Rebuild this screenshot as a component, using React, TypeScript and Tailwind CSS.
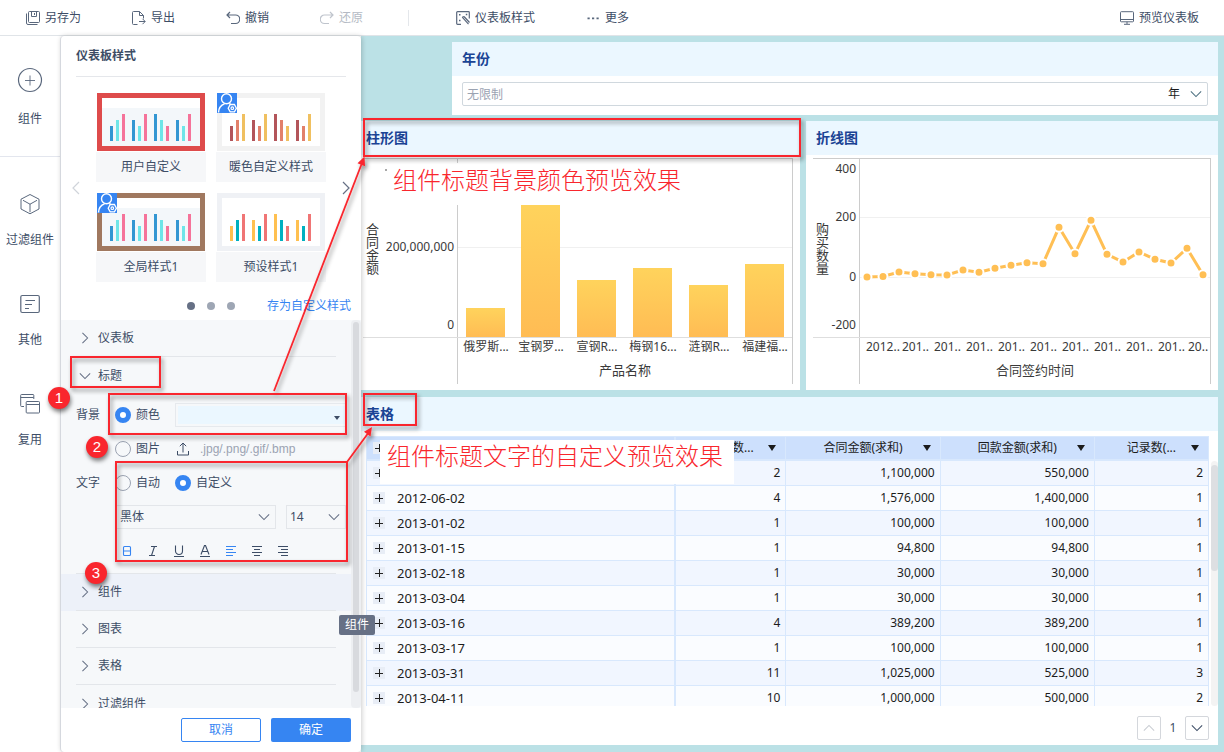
import React from "react";

const ThinChevron = ({ dir, className }: { dir: "up" | "down" | "left" | "right"; className?: string }) => {
  const paths = {
    down: "M1 4l6 6 6-6",
    up: "M1 10l6-6 6 6",
    left: "M10 1L4 7l6 6",
    right: "M4 1l6 6-6 6",
  };
  return (
    <svg viewBox="0 0 14 14" className={className} fill="none" stroke="currentColor" strokeWidth="1.2" aria-hidden="true">
      <path d={paths[dir]} />
    </svg>
  );
};

const Icon = ({ children, className = "size-3.5 opacity-85" }: { children: React.ReactNode; className?: string }) => (
  <svg viewBox="0 0 14 14" className={className} fill="none" stroke="currentColor" strokeWidth="1" aria-hidden="true">
    {children}
  </svg>
);

const SaveIcon = () => (
  <Icon>
    <path d="M3.5.5h9a1 1 0 0 1 1 1v9a1 1 0 0 1-1 1h-9a1 1 0 0 1-1-1v-9a1 1 0 0 1 1-1z" />
    <path d="M5.5.5v5h5v-5M8.500 2v2M.5 2.500v9.500a1.500 1.500 0 0 0 1.500 1.500h9.500" />
  </Icon>
);
const ExportIcon = () => (
  <Icon>
    <path d="M5.500 13.500h-4a1 1 0 0 1-1-1v-11a1 1 0 0 1 1-1h6l4 4v3M7.500.5v4h4M7 10.500h6M10.500 7.800l2.700 2.700-2.700 2.700" />
  </Icon>
);
const UndoIcon = () => (
  <Icon>
    <path strokeWidth="1.200" d="M4 1L1 4l3 3M1 4h8.500a4 4 0 0 1 0 8.500H5" />
  </Icon>
);
const RedoIcon = () => (
  <Icon>
    <path strokeWidth="1.200" d="M10 1l3 3-3 3M13 4H4.500a4 4 0 0 0 0 8.500H9" />
  </Icon>
);
const StyleIcon = () => (
  <Icon>
    <path strokeWidth="1.200" d="M5 13.300H1.500a.8.8 0 0 1-.8-.8v-11a.8.8 0 0 1 .8-.8h11a.8.8 0 0 1 .8.8V7.500" />
    <path strokeWidth="1.200" d="M6.200 6.200l6.300 7M8 5.500l5.500 6M6.200 6.200L8 5.500" />
    <path strokeWidth="1.500" d="M3 3.800h1.500M9.800 3.500h1.500M3 9.500h1.500" />
  </Icon>
);
const MoreIcon = () => (
  <svg viewBox="0 0 14 14" className="size-3.5 opacity-85" fill="currentColor" aria-hidden="true">
    <path d="M1.500 6.500h2.200v1.800H1.500zM6 6.500h2.200v1.800H6zM10.500 6.500h2.200v1.800h-2.200z" />
  </svg>
);
const ScreenIcon = () => (
  <Icon>
    <path d="M1.300.7h11.400a.8.8 0 0 1 .8.8v8.500a.8.8 0 0 1-.8.8H1.300a.8.8 0 0 1-.8-.8V1.500a.8.8 0 0 1 .8-.8zM.7 8.500h12.600M7 10.800v2.200M4 13.300h6" />
  </Icon>
);

const ToolButton = ({ icon, label, muted }: { icon: React.ReactNode; label: string; muted?: boolean }) => (
  <button type="button" disabled={muted} className={muted ? "flex items-center gap-[5px] text-[#b4bac4]" : "flex items-center gap-[5px]"}>
    {icon}
    <span>{label}</span>
  </button>
);

const Toolbar = () => (
  <header className="flex h-9 items-center border-b border-[#e0e4e8] bg-white pr-[25px] pl-[26px]">
    <div className="flex items-center gap-[51px]">
      <ToolButton icon={<SaveIcon />} label="另存为" />
      <ToolButton icon={<ExportIcon />} label="导出" />
      <ToolButton icon={<UndoIcon />} label="撤销" />
      <ToolButton icon={<RedoIcon />} label="还原" muted />
    </div>
    <div className="mr-[47px] ml-[45px] h-4 w-px bg-[#e4e7eb]" />
    <div className="flex items-center gap-[51px]">
      <ToolButton icon={<StyleIcon />} label="仪表板样式" />
      <ToolButton icon={<MoreIcon />} label="更多" />
    </div>
    <div className="ml-auto">
      <ToolButton icon={<ScreenIcon />} label="预览仪表板" />
    </div>
  </header>
);

const SideIcon = ({ children }: { children: React.ReactNode }) => (
  <svg viewBox="0 0 24 24" className="size-6 overflow-visible opacity-85" fill="none" stroke="currentColor" strokeWidth="1" aria-hidden="true">
    {children}
  </svg>
);

const Sidebar = () => (
  <nav className="w-[60px] shrink-0 bg-white">
    <button type="button" className="flex h-[121px] w-full flex-col items-center gap-[18px] border-b border-[#e3e6ee] pt-8">
      <SideIcon>
        <circle cx="12" cy="12" r="11.500" strokeWidth="1.200" />
        <path d="M7 12.500h10M12 7.500v10" strokeWidth="0.900" />
      </SideIcon>
      <span>组件</span>
    </button>
    <button type="button" className="flex h-[100px] w-full flex-col items-center gap-[15px] pt-[35px]">
      <SideIcon>
        <path d="M12 2.500l9 4.700v9.800l-9 4.800-9-4.800V7.200zM5 8.300l7 3.900 7-3.900M12 12.200v8" />
      </SideIcon>
      <span>过滤组件</span>
    </button>
    <button type="button" className="flex h-[100px] w-full flex-col items-center gap-[15px] pt-[35px]">
      <SideIcon>
        <rect x="2.800" y="3.500" width="18.500" height="17" rx="1.500" strokeWidth="1.200" />
        <path strokeWidth="1.100" d="M7.500 8.500h9.500M7 12.500h7M7 16.500h4" />
      </SideIcon>
      <span>其他</span>
    </button>
    <button type="button" className="flex h-[100px] w-full flex-col items-center gap-[15px] pt-[35px]">
      <SideIcon>
        <path d="M6 14.500H3.500a.8.8 0 0 1-.8-.8V3.300a.8.8 0 0 1 .8-.8h11.500a.8.8 0 0 1 .8.8V7M2.700 5.500h13" />
        <rect x="8.200" y="9.500" width="13.300" height="11.500" rx="0.800" />
        <path d="M8.500 12.500h12.800" />
      </SideIcon>
      <span>复用</span>
    </button>
  </nav>
);

const BAR_HEIGHTS = [15, 21, 27, 21, 15, 27, 27, 21, 15, 21, 15, 27];
const BAR_X = [13, 19, 25, 35, 41, 47, 57, 63, 69, 79, 85, 91];

type Theme = { name: string; frame: string; body: string; colors: string[]; user?: boolean };
const THEMES: Theme[] = [
  { name: "用户自定义", frame: "#de4b4b", body: "#f3f7fa", colors: ["#3296d2", "#6de5e8", "#f5739a"] },
  { name: "暖色自定义样式", frame: "#f2f2f2", body: "#ffffff", colors: ["#b3555a", "#e2806a", "#f0c060"], user: true },
  { name: "全局样式1", frame: "#a0785f", body: "#f3f7fa", colors: ["#3296d2", "#6de5e8", "#f5739a"], user: true },
  { name: "预设样式1", frame: "#eff1f5", body: "#ffffff", colors: ["#ffc050", "#00b0c0", "#f07575"] },
];

const ThemeCard = ({ theme }: { theme: Theme }) => (
  <button type="button" className="flex w-[110px] flex-col items-center gap-px">
    <svg viewBox="0 0 108 58" className="h-[58px] w-[108px]" aria-hidden="true">
      <rect width="108" height="58" fill={theme.frame} />
      <rect x="5" y="5" width="98" height="48" fill="#ffffff" />
      <rect x="5" y="15" width="98" height="38" fill={theme.body} />
      {BAR_X.map((x, i) => (
        <rect key={x} x={x} y={48 - BAR_HEIGHTS[i]} width="3" height={BAR_HEIGHTS[i]} fill={theme.colors[i % 3]} />
      ))}
      {theme.user && (
        <g fill="none" stroke="#ffffff" strokeWidth="1.400">
          <rect width="20" height="20" fill="#3685f2" stroke="none" />
          <circle cx="9.500" cy="5.800" r="5" />
          <path d="M1.500 19.500c.2-4.500 2.500-7.500 6-8.700M12.200 10.500l1.500.8" />
          <path strokeWidth="1.300" d="M13.200 11.500h4.200l2 3.700-2 3.600h-4.200l-2-3.600z" />
          <circle cx="15.300" cy="15.200" r="1.300" strokeWidth="1.200" />
        </g>
      )}
    </svg>
    <span className="flex h-[30px] w-full items-center justify-center bg-[#f6f7f9]">{theme.name}</span>
  </button>
);

const SectionRow = ({ label, open, active, last }: { label: string; open?: boolean; active?: boolean; last?: boolean }) => (
  <div className={active ? "bg-[#edf1f9] pr-[15px] pl-[15px]" : "pr-[15px] pl-[15px]"}>
    <button
      type="button"
      aria-expanded={open ? true : false}
      className={
        open || last
          ? "flex h-[37px] w-full items-center gap-1.5 pl-px"
          : "flex h-[37px] w-full items-center gap-1.5 border-b border-[#e3e6ea] pl-px"
      }
    >
      <span className="flex w-[15px] justify-center text-[#667085]">
        {open ? <ThinChevron dir="down" className="size-3" /> : <ThinChevron dir="right" className="size-3" />}
      </span>
      {label}
    </button>
  </div>
);

const Radio = ({ name, label, checked }: { name: string; label: string; checked?: boolean }) => (
  <label className="flex items-center gap-[5px]">
    <input
      type="radio"
      name={name}
      defaultChecked={checked}
      className="size-4 appearance-none rounded-full border border-[#9ba3b2] checked:border-[5px] checked:border-[#3685f2] checked:bg-white"
    />
    {label}
  </label>
);

const FORMAT_ICONS: { label: string; path: string; active?: boolean }[] = [
  { label: "加粗", path: "M2.500 2.500a1 1 0 0 1 1-1h5a1 1 0 0 1 1 1v7a1 1 0 0 1-1 1h-5a1 1 0 0 1-1-1zM2.500 6h7", active: true },
  { label: "斜体", path: "M4 1.500h6M2 10.500h6M7.500 1.500l-3 9" },
  { label: "下划线", path: "M2.500.5v5.500a3 3 0 0 0 7 0V.5M1 11.500h10" },
  { label: "文字颜色", path: "M2 9.500L5.500.5h1L10 9.500M3.500 6.500h5M1 11.500h10" },
  { label: "左对齐", path: "M1 1.500h10M1 4.500h7M1 7.500h10M1 10.500h7", active: true },
  { label: "居中对齐", path: "M1 1.500h10M3 4.500h6M1 7.500h10M3 10.500h6" },
  { label: "右对齐", path: "M1 1.500h10M4 4.500h7M1 7.500h10M4 10.500h7" },
];

const TitleSettings = () => (
  <div className="mr-[15px] ml-[15px] border-b border-[#e3e6ea] pt-1 pb-[5px]">
    <div className="flex h-[34px] items-center">
      <span className="w-[39px]">背景</span>
      <Radio name="background" label="颜色" checked />
      <button
        type="button"
        aria-label="背景颜色"
        className="-mr-[10px] ml-[15px] flex h-6 grow border border-[#e6e9ed] p-0.5 pr-0"
      >
        <span className="flex h-full grow items-end justify-end bg-[#ebf7ff] pr-[5px] pb-1">
          <svg viewBox="0 0 6 4" className="h-1 w-1.5" aria-hidden="true">
            <path d="M0 0h6L3 4z" fill="#3d4d66" />
          </svg>
        </span>
      </button>
    </div>
    <div className="flex h-[34px] items-center pl-[39px]">
      <Radio name="background" label="图片" />
      <button type="button" className="ml-4 flex items-center gap-2.5 text-[#9ba3b2]">
        <Icon className="size-3.5 text-[#3d4d66]">
          <path d="M1.500 9v4h11V9M7 1v9.500M3.800 4.200L7 1l3.200 3.200" />
        </Icon>
        <span className="font-['Liberation_Sans',sans-serif]">.jpg/.png/.gif/.bmp</span>
      </button>
    </div>
    <div className="flex h-[34px] items-center">
      <span className="w-[39px]">文字</span>
      <Radio name="text" label="自动" />
      <div className="ml-[15px]">
        <Radio name="text" label="自定义" checked />
      </div>
    </div>
    <div className="-mr-[10px] flex h-[34px] items-center gap-2.5 pl-10">
      <div className="relative grow">
        <select aria-label="字体" className="h-6 w-full appearance-none border border-[#e3e6ea] bg-transparent pl-[3px]">
          <option>黑体</option>
        </select>
        <ThinChevron dir="down" className="pointer-events-none absolute top-1.5 right-1.5 size-3 text-[#667085]" />
      </div>
      <div className="relative w-[60px]">
        <select aria-label="字号" className="h-6 w-full appearance-none border border-[#e3e6ea] bg-transparent pl-[3px]">
          <option>14</option>
        </select>
        <ThinChevron dir="down" className="pointer-events-none absolute top-1.5 right-1.5 size-3 text-[#667085]" />
      </div>
    </div>
    <div className="flex h-[34px] items-center gap-3.5 pl-[45px]">
      {FORMAT_ICONS.map((f) => (
        <button key={f.label} type="button" aria-label={f.label} className={f.active ? "text-[#3685f2]" : ""}>
          <svg viewBox="0 0 12 12" className="size-3" fill="none" stroke="currentColor" strokeWidth="1.100" aria-hidden="true">
            <path d={f.path} />
          </svg>
        </button>
      ))}
    </div>
  </div>
);

const StylePanel = () => (
  <section className="relative z-10 flex w-[301px] shrink-0 flex-col rounded border-l border-[#d5d8de] bg-white shadow-[1px_0_5px_rgba(0,0,0,0.2)]">
    <div className="mx-[15px] flex h-[41px] items-center border-b border-[#e5e7eb]">
      <h2 className="text-xs font-bold">仪表板样式</h2>
    </div>
    <div className="flex items-center justify-between px-2 pt-4">
      <button type="button" aria-label="上一页" className="text-[#d0d4da]">
        <ThinChevron dir="left" className="size-3.5" />
      </button>
      <div className="grid grid-cols-2 gap-x-2.5 gap-y-[11px]">
        {THEMES.map((t) => (
          <ThemeCard key={t.name} theme={t} />
        ))}
      </div>
      <button type="button" aria-label="下一页" className="text-[#667085]">
        <ThinChevron dir="right" className="size-3.5" />
      </button>
    </div>
    <div className="flex h-[38px] items-center justify-end pt-2.5 pr-2.5">
      <div className="flex gap-3 pr-8">
        <span className="size-2 rounded-full bg-[#667085]" />
        <span className="size-2 rounded-full bg-[#9ea6b4]" />
        <span className="size-2 rounded-full bg-[#9ea6b4]" />
      </div>
      <a href="#save" className="text-[#3685f2]">
        存为自定义样式
      </a>
    </div>
    <div className="flex h-[388px] bg-[#f6f8fa]">
      <div className="grow overflow-hidden">
        <SectionRow label="仪表板" />
        <SectionRow label="标题" open />
        <TitleSettings />
        <SectionRow label="组件" active />
        <SectionRow label="图表" />
        <SectionRow label="表格" />
        <SectionRow label="过滤组件" last />
      </div>
      <div className="w-2.5 rounded bg-[#edeff2] px-0.5 pt-0.5">
        <div className="h-[370px] rounded bg-[#d8dade]" />
      </div>
    </div>
    <div className="flex grow items-start justify-end gap-2.5 pt-2.5 pr-2.5">
      <button type="button" className="h-6 w-20 rounded-xs border border-[#3685f2] text-[#3685f2]">
        取消
      </button>
      <button type="button" className="h-6 w-20 rounded-xs bg-[#3685f2] text-white">
        确定
      </button>
    </div>
    <div role="tooltip" className="absolute top-[579px] left-[278px] flex h-5 w-9 items-center justify-center rounded-xs bg-[#667085] text-white">
      组件
    </div>
  </section>
);

const CardTitle = ({ children, inset }: { children: React.ReactNode; inset?: boolean }) => (
  <h3
    className={
      inset
        ? "flex h-[34px] items-center bg-[#ebf7ff] pl-[5px] text-sm font-bold text-[#1a4394]"
        : "flex h-[34px] items-center bg-[#ebf7ff] pl-2.5 text-sm font-bold text-[#1a4394]"
    }
  >
    {children}
  </h3>
);

const BARS = [
  { x: 105, top: 153, label: "俄罗斯..." },
  { x: 160, top: 50, label: "宝钢罗..." },
  { x: 216, top: 125, label: "宣钢R..." },
  { x: 272, top: 113, label: "梅钢16..." },
  { x: 328, top: 130, label: "涟钢R..." },
  { x: 384, top: 109, label: "福建福..." },
];

const BarChart = () => (
  <svg viewBox="0 0 439 235" className="block w-full text-xs" fill="#3a3a3a" role="img" aria-label="柱形图">
    <defs>
      <linearGradient id="bar" x1="0" y1="0" x2="0" y2="1">
        <stop offset="0" stopColor="#ffd35c" />
        <stop offset="1" stopColor="#ffbc54" />
      </linearGradient>
    </defs>
    <path d="M2 3.500h430M431.500 3v226M96.500 3v5M96.500 50v179" stroke="#ccc" fill="none" />
    <path d="M97 92.500h334" stroke="#f0f0f0" />
    <path d="M2 182.500h429" stroke="#dedede" />
    {BARS.map((b) => (
      <g key={b.x}>
        <rect x={b.x} y={b.top} width="39" height={182 - b.top} fill="url(#bar)" />
        <text x={b.x + 20} y="196" textAnchor="middle">
          {b.label}
        </text>
      </g>
    ))}
    <circle cx="25" cy="15" r="0.800" />
    <text x="93" y="96" textAnchor="end">
      200,000,000
    </text>
    <text x="93" y="174" textAnchor="end">
      0
    </text>
    <text x="11" y="68" className="text-[13px] [writing-mode:vertical-rl]">
      合同金额
    </text>
    <text x="264" y="220" textAnchor="middle" className="text-[13px]">
      产品名称
    </text>
  </svg>
);

const POINTS = [
  [61, 122], [77, 121.5], [93, 117], [109, 118.7], [125, 119.7], [141, 120], [157, 115], [173, 117.3],
  [189, 113.3], [205, 110.3], [221, 107.7], [237, 108.7], [253, 72.3], [269, 98.7], [285, 65.3], [301, 99.3],
  [317, 107], [333, 97], [349, 104.3], [365, 108], [381, 93.3], [397, 119.7],
];
const DATES: [number, string][] = [
  [60, "2012.."], [96, "201.."], [128, "201.."], [160, "201.."], [192, "201.."], [224, "201.."],
  [256, "201.."], [288, "201.."], [320, "201.."], [352, "201.."], [382, "20.."],
];

const LineChart = () => (
  <svg viewBox="0 0 412 235" className="block w-full text-xs" fill="#3a3a3a" role="img" aria-label="折线图">
    <path d="M7 3.500h398M404.500 3v226M53.500 3v226" stroke="#ccc" fill="none" />
    <path d="M54 62.500h350M54 122.500h350" stroke="#f0f0f0" />
    <path d="M7 182.500h397" stroke="#dedede" />
    <polyline points={POINTS.map((p) => p.join(",")).join(" ")} fill="none" stroke="#ffbf54" strokeWidth="3" />
    {POINTS.map(([x, y]) => (
      <circle key={x} cx={x} cy={y} r="4.500" fill="#ffbf54" stroke="#ffffff" strokeWidth="2" />
    ))}
    <g textAnchor="end">
      <text x="50" y="18">400</text>
      <text x="50" y="66">200</text>
      <text x="50" y="126">0</text>
      <text x="50" y="174">-200</text>
    </g>
    {DATES.map(([x, t]) => (
      <text key={x} x={x} y="196">
        {t}
      </text>
    ))}
    <text x="16" y="68" className="text-[13px] [writing-mode:vertical-rl]">
      购买数量
    </text>
    <text x="229" y="220" textAnchor="middle" className="text-[13px]">
      合同签约时间
    </text>
  </svg>
);

const ROWS = [
  ["", "2", "1,100,000", "550,000", "2"],
  ["2012-06-02", "4", "1,576,000", "1,400,000", "1"],
  ["2013-01-02", "1", "100,000", "100,000", "1"],
  ["2013-01-15", "1", "94,800", "94,800", "1"],
  ["2013-02-18", "1", "30,000", "30,000", "1"],
  ["2013-03-04", "1", "30,000", "30,000", "1"],
  ["2013-03-16", "4", "389,200", "389,200", "1"],
  ["2013-03-17", "1", "100,000", "100,000", "1"],
  ["2013-03-31", "11", "1,025,000", "525,000", "3"],
  ["2013-04-11", "10", "1,000,000", "500,000", "2"],
];

const Expand = ({ label }: { label: string }) => (
  <button type="button" aria-label={label} className="flex size-3 shrink-0 items-center justify-center bg-[#e8edf6]">
    <svg viewBox="0 0 8 8" className="size-2" stroke="#222" aria-hidden="true">
      <path d="M0 4.500h8M4.500 0v8" />
    </svg>
  </button>
);

const HeadCell = ({ label, lead }: { label: string; lead?: boolean }) => (
  <th
    scope="col"
    className={
      lead
        ? "relative h-6 border-r border-b-2 border-l-2 border-[#d8e8fd] p-0 text-center font-normal"
        : "relative h-6 border-r border-b-2 border-[#d8e8fd] p-0 text-center font-normal"
    }
  >
    {label}
    <svg viewBox="0 0 8 6" className="absolute top-2 right-[9px] h-1.5 w-2" aria-hidden="true">
      <path d="M0 0h8L4 6z" fill="#1c1c1c" />
    </svg>
  </th>
);

const DataTable = () => (
  <div className="flex h-[270px] gap-0.5">
    <div className="grow overflow-hidden">
      <table className="w-full table-fixed border-separate border-spacing-0 border-t border-l border-[#d8e8fd] text-[#1c1c1c]">
        <colgroup>
          <col className="w-[307px]" />
          <col className="w-[112px]" />
          <col className="w-[154px]" />
          <col className="w-[154px]" />
          <col className="w-[114px]" />
        </colgroup>
        <thead className="bg-[#cde0fd]">
          <tr>
            <th scope="col" className="h-6 border-b-2 border-[#d8e8fd] p-0 pl-1.5">
              <Expand label="全部展开" />
            </th>
            <HeadCell label="购买数..." lead />
            <HeadCell label="合同金额(求和)" />
            <HeadCell label="回款金额(求和)" />
            <HeadCell label="记录数(..." />
          </tr>
        </thead>
        <tbody>
          {ROWS.map((r, i) => (
            <tr key={i} className="odd:bg-[#f1f6ff] even:bg-[#fafcff]">
              <td className="h-[25px] border-b border-[#d8e8fd] p-0 pl-1.5 text-[13px]">
                <span className="flex items-center gap-3">
                  <Expand label={"展开 " + r[0]} />
                  {r[0]}
                </span>
              </td>
              <td className="border-r border-b border-l-2 border-[#d8e8fd] p-0 pr-[5px] text-right">{r[1]}</td>
              <td className="border-r border-b border-[#d8e8fd] p-0 pr-[5px] text-right">{r[2]}</td>
              <td className="border-r border-b border-[#d8e8fd] p-0 pr-[5px] text-right">{r[3]}</td>
              <td className="border-r border-b border-[#d8e8fd] p-0 pr-[5px] text-right">{r[4]}</td>
            </tr>
          ))}
        </tbody>
      </table>
    </div>
    <div className="mt-[25px] w-[7px] shrink-0 rounded bg-[#f3f3f3] pt-1">
      <div className="h-[106px] rounded bg-[#dddfe2]" />
    </div>
  </div>
);

const Dashboard = () => (
  <main className="min-w-0 grow bg-[#bbe1e6] pt-1.5 pr-1.5 pb-[7px]">
    <section className="ml-[91px] h-[73px] bg-white">
      <CardTitle>年份</CardTitle>
      <div className="px-2.5 pt-1.5">
        <div className="flex h-6 items-center rounded-xs border border-[#d0d8de]">
          <input
            aria-label="年份"
            placeholder="无限制"
            className="h-full min-w-0 grow px-1 outline-none placeholder:text-[#9ba3b2]"
          />
          <button type="button" className="flex items-center gap-2.5 pr-[5px] text-[#1c1c1c]">
            年
            <ThinChevron dir="down" className="size-3 text-[#4d7080]" />
          </button>
        </div>
      </div>
    </section>
    <div className="mt-1.5 grid grid-cols-[439fr_412fr] gap-1.5">
      <section className="bg-white">
        <CardTitle inset>柱形图</CardTitle>
        <BarChart />
      </section>
      <section className="bg-white">
        <CardTitle>折线图</CardTitle>
        <LineChart />
      </section>
    </div>
    <section className="mt-[7px] bg-white">
      <CardTitle inset>表格</CardTitle>
      <div className="pt-[5px] pl-[5px]">
        <DataTable />
      </div>
      <div className="flex h-[39px] items-center justify-end gap-2 pt-2.5 pr-[9px] pb-[5px]">
        <button type="button" aria-label="上一页" className="flex size-6 items-center justify-center rounded-xs border border-[#d4d7dc] text-[#c8ccd2]">
          <ThinChevron dir="up" className="size-3" />
        </button>
        <span className="w-2 text-center">1</span>
        <button type="button" aria-label="下一页" className="flex size-6 items-center justify-center rounded-xs border border-[#d4d7dc] text-[#3d4d66]">
          <ThinChevron dir="down" className="size-3" />
        </button>
      </div>
    </section>
  </main>
);

const Step = ({ n, className }: { n: number; className: string }) => (
  <span
    className={
      "absolute flex size-[22px] items-center justify-center rounded-full bg-[#f9262d] font-['Liberation_Sans',sans-serif] text-[15px] text-white shadow-[1px_3px_4px_rgba(0,0,0,0.5)] " +
      className
    }
  >
    {n}
  </span>
);

const Annotations = () => (
  <div className="pointer-events-none absolute top-0 left-0 z-20">
    <svg viewBox="0 0 820 600" className="h-[600px] w-[820px]" aria-hidden="true">
      <defs>
        <filter id="shade" x="-10%" y="-10%" width="120%" height="130%">
          <feDropShadow dx="2" dy="3" stdDeviation="2" floodColor="#000" floodOpacity="0.45" />
        </filter>
      </defs>
      <g filter="url(#shade)" fill="none" stroke="#f9262d" strokeWidth="2">
        <rect x="364" y="119" width="436" height="37" />
        <rect x="364" y="394" width="52" height="31" />
        <rect x="71" y="357" width="89" height="30" />
        <rect x="109" y="394" width="237" height="40" />
        <rect x="116" y="462" width="231" height="99" />
        <path strokeWidth="1.800" d="M274 391L362 163" />
        <path strokeWidth="1.800" d="M347 462l22-30" />
        <path stroke="none" fill="#f9262d" d="M364.500 156.500l.5 9.800-7.500-3z" />
        <path stroke="none" fill="#f9262d" d="M372 427l-1.500 9.500-6.500-4.700z" />
      </g>
    </svg>
    <Step n={1} className="top-[387px] left-12" />
    <Step n={2} className="top-[436px] left-[86px]" />
    <Step n={3} className="top-[562px] left-[85px]" />
    <p className="absolute top-[168px] left-[393px] text-2xl leading-6 font-light whitespace-nowrap text-[#f9262d]">
      组件标题背景颜色预览效果
    </p>
    <p className="absolute top-[440px] left-[380px] h-11 w-[354px] bg-white pt-1 pl-[7px] text-2xl leading-6 font-light whitespace-nowrap text-[#f9262d]">
      组件标题文字的自定义预览效果
    </p>
  </div>
);

export default function App() {
  return (
    <div className="relative flex min-h-screen flex-col overflow-hidden bg-white font-['Noto_Sans','Noto_Sans_CJK_SC',sans-serif] text-xs leading-[18px] text-[#3d4d66]">
      <Toolbar />
      <div className="flex grow">
        <Sidebar />
        <StylePanel />
        <Dashboard />
      </div>
      <Annotations />
    </div>
  );
}
